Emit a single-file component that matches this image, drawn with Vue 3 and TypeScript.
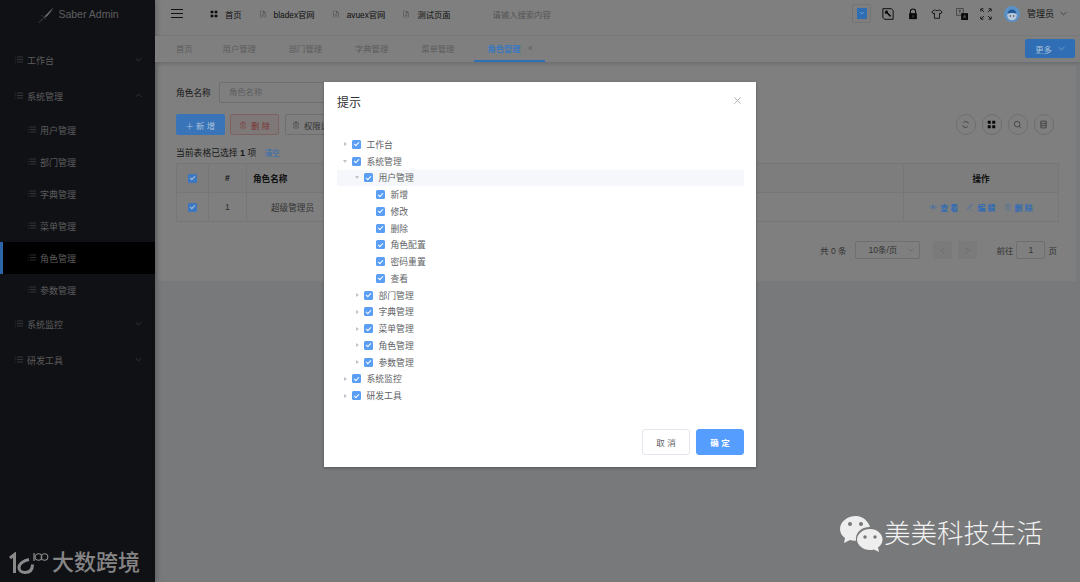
<script setup lang="ts">
const icons: Record<string, string> = {
  list: 'M1 2h1v.8H1zM1 5h1v.8H1zM1 8h1v.8H1zM3.500 2.100H11v.6H3.500zM3.500 5.100H11v.6H3.500zM3.500 8.100H11v.6H3.500z',
  doc: 'M2 1h5l3 3v7H2zM3 2v8h6V5H6V2zM4 6.500h4v.7H4zM4 8h4v.7H4z',
  grid: 'M1 1h4v4H1zM7 1h4v4H7zM1 7h4v4H1zM7 7h4v4H7z',
  trash: 'M1.500 2.500h9v.7h-9zM4.500 1h3v1.500h-.7v-.8H5.200v.8h-.7zM2.500 3.200h.7V10.300h5.600V3.200h.7V11h-7zM5 5h.6v3.500H5zM6.400 5h.6v3.500h-.6z',
  eye: 'M6 2.500C3.500 2.500 1.500 4.500 .5 6c1 1.500 3 3.500 5.500 3.500S10.500 7.500 11.500 6C10.500 4.500 8.500 2.500 6 2.500zM6 3.300c1.900 0 3.500 1.500 4.500 2.700C9.500 7.200 7.900 8.700 6 8.700S2.500 7.200 1.500 6C2.500 4.800 4.100 3.300 6 3.300zM6 4.200a1.800 1.800 0 1 0 0 3.600 1.800 1.800 0 0 0 0-3.600z',
  pen: 'M8 1l2 2-6 6-2.500.5L2 7zM8 2.200L2.800 7.400l-.3 1.100 1.100-.3L8.800 3zM6 10.200h5v.7H6z',
};
const topNav = [
  { label: 'bladex官网' },
  { label: 'avuex官网' },
  { label: '测试页面' },
];
const tabs = ['首页', '用户管理', '部门管理', '字典管理', '菜单管理'];
const subMenu = ['用户管理', '部门管理', '字典管理', '菜单管理', '角色管理', '参数管理'];
const rowActions = [
  { label: '查看', icon: 'eye' },
  { label: '编辑', icon: 'pen' },
  { label: '删除', icon: 'trash' },
];
type Row = { label: string; level: number; arrow: 'open' | 'closed' | 'none'; current?: boolean };
const tree: Row[] = [
  { label: '工作台', level: 0, arrow: 'closed' },
  { label: '系统管理', level: 0, arrow: 'open' },
  { label: '用户管理', level: 1, arrow: 'open', current: true },
  { label: '新增', level: 2, arrow: 'none' },
  { label: '修改', level: 2, arrow: 'none' },
  { label: '删除', level: 2, arrow: 'none' },
  { label: '角色配置', level: 2, arrow: 'none' },
  { label: '密码重置', level: 2, arrow: 'none' },
  { label: '查看', level: 2, arrow: 'none' },
  { label: '部门管理', level: 1, arrow: 'closed' },
  { label: '字典管理', level: 1, arrow: 'closed' },
  { label: '菜单管理', level: 1, arrow: 'closed' },
  { label: '角色管理', level: 1, arrow: 'closed' },
  { label: '参数管理', level: 1, arrow: 'closed' },
  { label: '系统监控', level: 0, arrow: 'closed' },
  { label: '研发工具', level: 0, arrow: 'closed' },
];
function indent(level: number) {
  return { paddingLeft: level * 12 + 'px' };
}
</script>

<template>
  <div class="app">
    <aside class="side">
      <div class="brand">
        <svg class="brand-mark" viewBox="0 0 16 16" width="16" height="16">
          <path d="M15.500 .5C13 3 9 6.500 6.500 9.500l1 1C10.500 8 13.500 4 15.500 .5z" fill="#d8d8d8" />
          <path d="M4 8.500l4 4M1 15.500l4.500-4.500" stroke="#d8d8d8" stroke-width=".9" fill="none" stroke-dasharray="1.200 .8" />
        </svg>
        <span>Saber Admin</span>
      </div>
      <nav class="menu">
        <div class="menu-top">
          <svg class="mi" viewBox="0 0 12 12"><path :d="icons.list" /></svg>
          <span>工作台</span>
          <svg class="chev" viewBox="0 0 10 10"><path d="M1 3l4 4 4-4" /></svg>
        </div>
        <div class="menu-top">
          <svg class="mi" viewBox="0 0 12 12"><path :d="icons.list" /></svg>
          <span>系统管理</span>
          <svg class="chev" viewBox="0 0 10 10"><path d="M1 7l4-4 4 4" /></svg>
        </div>
        <div v-for="m in subMenu" :key="m" class="menu-sub" :class="{ active: m === '角色管理' }">
          <svg class="mi" viewBox="0 0 12 12"><path :d="icons.list" /></svg>
          <span>{{ m }}</span>
        </div>
        <div class="menu-top">
          <svg class="mi" viewBox="0 0 12 12"><path :d="icons.list" /></svg>
          <span>系统监控</span>
          <svg class="chev" viewBox="0 0 10 10"><path d="M1 3l4 4 4-4" /></svg>
        </div>
        <div class="menu-top">
          <svg class="mi" viewBox="0 0 12 12"><path :d="icons.list" /></svg>
          <span>研发工具</span>
          <svg class="chev" viewBox="0 0 10 10"><path d="M1 3l4 4 4-4" /></svg>
        </div>
      </nav>
    </aside>

    <div class="main">
      <header class="top">
        <div class="burger"><i></i><i></i><i></i></div>
        <div class="tnav first">
          <svg viewBox="0 0 12 12" class="ti dark"><path :d="icons.grid" /></svg><span>首页</span>
        </div>
        <div v-for="n in topNav" :key="n.label" class="tnav">
          <svg viewBox="0 0 12 12" class="ti"><path :d="icons.doc" /></svg><span>{{ n.label }}</span>
        </div>
        <div class="search">请输入搜索内容</div>
        <div class="tools">
          <div class="swatch">
            <i class="accent"><svg viewBox="0 0 10 10"><path d="M3 4l2 2 2-2" /></svg></i>
          </div>
          <svg class="tool" viewBox="0 0 14 14">
            <path d="M1 .8h10l2 2.200v10.200H3L1 11z" fill="none" stroke="#111" stroke-width="1.100" />
            <path d="M4 3.500l1.500-1 1.700 1.700-.4 1 3.900 3.900-1.300 1.300-3.900-3.900-1 .4L3 5.500z" fill="#111" />
          </svg>
          <svg class="tool" viewBox="0 0 14 14">
            <path d="M4 6V4.200a3 3 0 0 1 6 0V6" fill="none" stroke="#111" stroke-width="1.300" />
            <path d="M2.500 6h9v7h-9z" fill="#111" /><path d="M6.400 8.500h1.200v2.500H6.400z" fill="#aaa" />
          </svg>
          <svg class="tool" viewBox="0 0 14 14">
            <path d="M4.500 2L1 4.500l1.500 2.200 1.500-.8V12h6V5.900l1.500.8L13 4.500 9.500 2C9 3.500 5 3.500 4.500 2z" fill="none" stroke="#111" stroke-width="1" />
          </svg>
          <svg class="tool" viewBox="0 0 14 14">
            <path d="M.5 .5h8v8h-8z" fill="none" stroke="#777" stroke-width="1" />
            <path d="M3 3h3v.8H3zM4 2h1v4H4z" fill="#777" />
            <path d="M6 6h8v8H6z" fill="#111" />
            <path d="M9.500 8h1l1.500 4h-1l-.3-1H9.300L9 12H8z" fill="#999" />
          </svg>
          <svg class="tool" viewBox="0 0 14 14">
            <path d="M1 4V1h3M1.500 1.500L4.500 4.500M10 1h3v3M12.500 1.500L9.500 4.500M1 10v3h3M1.500 12.500L4.500 9.500M13 10v3h-3M12.500 12.500L9.500 9.500" fill="none" stroke="#222" stroke-width="1.100" />
          </svg>
          <svg class="avatar accent" viewBox="0 0 16 16">
            <circle cx="8" cy="8" r="8" fill="#5a92c8" />
            <circle cx="8" cy="9.500" r="4.800" fill="#b8c8d8" />
            <path d="M3.500 8a4.500 4.500 0 0 1 9 0c-2-1.300-7-1.300-9 0z" fill="#1f5a96" />
            <circle cx="6.300" cy="10" r=".7" fill="#234" /><circle cx="9.700" cy="10" r=".7" fill="#234" />
          </svg>
          <span class="user">管理员</span>
          <svg class="user-chev" viewBox="0 0 10 10"><path d="M1 3l4 4 4-4" /></svg>
        </div>
      </header>

      <div class="tabs">
        <span v-for="t in tabs" :key="t" class="tab">{{ t }}</span>
        <span class="tab on accent">角色管理<em>×</em></span>
        <button class="more accent">更多<svg viewBox="0 0 10 10"><path d="M1 3l4 4 4-4" /></svg></button>
      </div>

      <div class="content">
        <section class="card">
          <div class="form">
            <label>角色名称</label>
            <div class="input">角色名称</div>
          </div>
          <div class="toolbar">
            <button class="btn primary accent">＋ 新 增</button>
            <button class="btn danger"><svg viewBox="0 0 12 12"><path :d="icons.trash" /></svg>删 除</button>
            <button class="btn plain"><svg viewBox="0 0 12 12"><path :d="icons.trash" /></svg>权限设置</button>
            <div class="circles">
              <span class="circle"><svg viewBox="0 0 12 12"><path d="M10 5a4 4 0 0 0-7-1.500M2 7a4 4 0 0 0 7 1.500" fill="none" stroke="#444" stroke-width=".8" /></svg></span>
              <span class="circle"><svg viewBox="0 0 12 12"><path :d="icons.grid" fill="#111" /></svg></span>
              <span class="circle"><svg viewBox="0 0 12 12"><circle cx="5.500" cy="5.500" r="3.800" fill="none" stroke="#444" stroke-width=".8" /><path d="M8.300 8.300L11 11" stroke="#444" stroke-width=".8" /></svg></span>
              <span class="circle"><svg viewBox="0 0 12 12"><path d="M2.500 1.500h7v9h-7zM2.500 4.500h7M2.500 7.500h7" fill="none" stroke="#444" stroke-width=".8" /></svg></span>
            </div>
          </div>
          <div class="selected">当前表格已选择 <b>1</b> 项 <a class="accent">清空</a></div>
          <div class="table">
            <div class="th c"><span class="cb accent"></span></div>
            <div class="th c">#</div>
            <div class="th name">角色名称</div>
            <div class="th"></div>
            <div class="th c">操作</div>
            <div class="td c"><span class="cb accent"></span></div>
            <div class="td c">1</div>
            <div class="td c">超级管理员</div>
            <div class="td"></div>
            <div class="td c actions">
              <span v-for="a in rowActions" :key="a.label" class="accent">
                <svg viewBox="0 0 12 12"><path :d="icons[a.icon]" /></svg>{{ a.label[0] }} {{ a.label[1] }}
              </span>
            </div>
          </div>
          <div class="pager">
            <span>共 0 条</span>
            <div class="size">10条/页<svg viewBox="0 0 10 10"><path d="M1 3l4 4 4-4" /></svg></div>
            <span class="pbtn prev"><svg viewBox="0 0 10 10"><path d="M7 1L3 5l4 4" /></svg></span>
            <span class="pbtn"><svg viewBox="0 0 10 10"><path d="M3 1l4 4-4 4" /></svg></span>
            <span class="goto">前往</span>
            <div class="pinput">1</div>
            <span>页</span>
          </div>
        </section>
      </div>
    </div>

    <div class="overlay">
      <div class="modal">
        <div class="m-head">
          <span>提示</span>
          <svg viewBox="0 0 10 10"><path d="M1.500 1.500l7 7M8.500 1.500l-7 7" /></svg>
        </div>
        <div class="m-tree">
          <div v-for="(r, i) in tree" :key="i" class="t-row" :class="{ current: r.current }" :style="indent(r.level)">
            <span class="t-arrow" :class="r.arrow"></span>
            <span class="cb"></span>
            <span class="t-label">{{ r.label }}</span>
          </div>
        </div>
        <div class="m-foot">
          <button class="f-btn">取 消</button>
          <button class="f-btn ok">确 定</button>
        </div>
      </div>
    </div>

    <div class="wm-left">
      <svg viewBox="0 0 40 22" width="40" height="22">
        <path d="M1 6l4.500-3.500V21" fill="none" stroke="#8a8a8a" stroke-width="3" />
        <path d="M20 7.500c-5 1-10 4-10 8 0 3 2.500 5 6 5 5 0 7.500-3 7.500-8" fill="none" stroke="#8a8a8a" stroke-width="3" />
        <path d="M25 1v8" stroke="#8a8a8a" stroke-width="1.300" />
        <ellipse cx="29.500" cy="5" rx="3.300" ry="3.200" fill="none" stroke="#8a8a8a" stroke-width="1.100" />
        <ellipse cx="35.500" cy="5" rx="3.300" ry="3.200" fill="none" stroke="#8a8a8a" stroke-width="1.100" />
      </svg>
      <span>大数跨境</span>
    </div>
    <div class="wm-right">
      <svg viewBox="0 0 44 40" width="44" height="40">
        <path d="M17 2C8 2 1 8 1 15c0 4 2 7 5 9l-1 5 6-3c2 .6 4 .8 6 .7C16 19 22 13 31 13 29 7 24 2 17 2z" fill="#eee" />
        <path d="M31 15c-7 0-13 5-13 10.500S24 36 31 36c1.500 0 3-.2 4-.6L40 38l-1-4.500c3-2 4.500-4.700 4.500-8C43.500 20 38 15 31 15z" fill="#eee" />
        <circle cx="11" cy="10" r="2" fill="#777" /><circle cx="22" cy="10" r="2" fill="#777" />
        <circle cx="26" cy="23" r="1.700" fill="#777" /><circle cx="36" cy="23" r="1.700" fill="#777" />
      </svg>
      <span>美美科技生活</span>
    </div>
  </div>
</template>

<style scoped>
.app {
  position: relative;
  display: flex;
  width: 1080px;
  height: 582px;
  overflow: hidden;
  font-family: "Liberation Sans", "Noto Sans CJK SC", sans-serif;
  color: #555;
  font-size: 9px;
}
/* Accent elements stay vivid above the dimming layer, as they do in the reference. */
.accent { position: relative; z-index: 2; }
.side { width: 155px; flex: none; background: #20222a; color: #b4b4b4; position: relative; box-shadow: 2px 0 5px rgba(0, 0, 0, .2); }
.brand { height: 28px; display: flex; align-items: center; justify-content: center; gap: 4px; font-size: 10.500px; color: #bbb; }
.brand-mark { margin-left: 2px; margin-top: 2px; }
.menu { margin-top: 14px; }
.menu-top { height: 36px; display: flex; align-items: center; padding-left: 14px; position: relative; }
.menu-sub { height: 32px; display: flex; align-items: center; padding-left: 27px; }
.menu-sub.active { background: #000; padding-left: 27px; position: relative; }
.menu-sub.active::before { content: ""; position: absolute; left: 0; top: 0; bottom: 0; width: 3px; background: #2c66a8; z-index: 2; }
.mi { width: 10px; height: 10px; margin-right: 3px; fill: #b4b4b4; }
.chev { position: absolute; right: 13px; top: 14px; width: 7px; height: 7px; fill: none; stroke: #888; stroke-width: 1; }

.main { flex: 1; min-width: 0; display: flex; flex-direction: column; background: #f0f2f5; }
.top { height: 36px; box-sizing: border-box; background: #fff; display: flex; align-items: center; padding: 0 0 8px 16px; flex: none; color: #333; font-size: 8.300px; border-bottom: 1px solid #f6f6f6; }
.burger { width: 12px; display: flex; flex-direction: column; gap: 3px; margin-right: 27px; }
.burger i { display: block; height: 1px; background: #222; }
.tnav { display: flex; align-items: center; margin-right: 17px; color: #222; }
.ti { width: 8px; height: 8px; margin-right: 7px; fill: #aaa; }
.ti.dark { fill: #111; }
.search { margin-left: 25px; color: #aaa; }
.tools { margin-left: auto; display: flex; align-items: center; padding-right: 13px; }
.swatch { width: 17px; height: 17px; border: 1px solid #e8e8e8; border-radius: 2px; display: flex; align-items: center; justify-content: center; margin-right: 11px; }
.swatch i { width: 10.500px; height: 10.500px; background: #2f6db5; display: block; }
.swatch svg { display: block; width: 10px; height: 10px; fill: none; stroke: #7aa4d0; stroke-width: .8; }
.tool { width: 12px; height: 12px; margin-right: 12.500px; }
.avatar { width: 16px; height: 16px; margin-left: -1px; margin-right: 7px; }
.user { font-size: 9px; color: #333; }
.user-chev { width: 7px; height: 7px; margin-left: 6px; fill: none; stroke: #555; stroke-width: 1; }

.tabs { height: 26px; flex: none; background: #fff; display: flex; align-items: stretch; padding-left: 21px; position: relative; box-shadow: 0 1px 3px rgba(0, 0, 0, .12); font-size: 8.300px; color: #b8b8b8; }
.tab { display: flex; align-items: center; margin-right: 33px; padding-bottom: 2px; }
.tab:first-child { margin-right: 30px; }
.tab.on { color: #3a78c0; margin-left: -13px; padding: 0 13px 0; border-bottom: 2px solid #2f6fb8; margin-right: 0; font-weight: 700; box-sizing: border-box; }
.tab.on em { font-style: normal; font-weight: 400; margin-left: 7px; color: #606060; }
.more { position: absolute; right: 5px; top: 3px; width: 50px; height: 19px; border: 0; border-radius: 2px; background: #2f6db5; color: #a9c0da; font: inherit; font-size: 8.300px; display: flex; align-items: center; justify-content: center; gap: 6px; padding: 0; }
.more svg { width: 7px; height: 7px; fill: none; stroke: #8fb0d4; stroke-width: 1; }

.content { padding: 4px 4px 0 3px; flex: 1; }
.card { background: #fff; height: 215px; padding: 16px 17px 0 18px; box-sizing: border-box; }
.form { display: flex; align-items: center; height: 21px; font-size: 8.700px; color: #333; }
.form label { width: 43px; }
.input { width: 111px; height: 21px; box-sizing: border-box; border: 1px solid #dcdfe6; border-radius: 2px; padding-left: 9px; line-height: 19px; color: #bbb; font-size: 8.300px; }
.toolbar { display: flex; align-items: center; gap: 5.500px; margin-top: 11px; height: 21px; }
.btn { height: 21px; padding: 0; box-sizing: border-box; border-radius: 2px; font: inherit; font-size: 8.300px; display: flex; align-items: center; justify-content: center; }
.btn svg { width: 8px; height: 8px; margin-right: 4px; fill: currentColor; }
.primary { width: 48.500px; background: #3a74b8; border: 0; color: #a9c0da; }
.danger { width: 49px; background: #fef0f0; border: 1px solid #fbc4c4; color: #f56c6c; }
.plain { width: 60px; background: #fff; border: 1px solid #dcdfe6; color: #666; }
.circles { margin-left: auto; margin-right: 5px; display: flex; gap: 5.500px; }
.circle { width: 20.500px; height: 20.500px; box-sizing: border-box; border: 1px solid #ddd; border-radius: 50%; display: flex; align-items: center; justify-content: center; }
.circle svg { width: 9px; height: 9px; }
.selected { margin-top: 12px; height: 12px; line-height: 12px; font-size: 8.800px; color: #333; }
.selected b { font-size: 9px; }
.selected a { color: #2f6cb5; margin-left: 6px; font-size: 7.500px; }
.table { margin-top: 4px; display: grid; grid-template-columns: 32px 38px 92px 1fr 155px; grid-template-rows: 29px 29px; border-top: 1px solid #ebeef5; border-left: 1px solid #ebeef5; }
.th, .td { border-right: 1px solid #ebeef5; border-bottom: 1px solid #ebeef5; display: flex; align-items: center; font-size: 8.600px; min-width: 0; }
.th { background: #fafafa; font-weight: 700; color: #222; }
.th.name { padding-left: 6px; }
.c { justify-content: center; }
.td { color: #666; }
.cb { width: 9px; height: 9px; flex: none; border-radius: 1.500px; background: #5a9ef5; position: relative; display: block; }
.table .cb { background: #3c78c0; position: relative; z-index: 2; }
.cb::after { content: ""; position: absolute; left: 3px; top: 1.500px; width: 2.200px; height: 4px; border: solid #fff; border-width: 0 1px 1px 0; transform: rotate(45deg); }
.table .cb::after { border-color: #a9c0da; }
.actions { gap: 8px; color: #2f6cb5; font-size: 8px; font-weight: 700; }
.actions span { display: flex; align-items: center; }
.actions svg { width: 8px; height: 8px; fill: #2f6cb5; margin-right: 3px; opacity: .7; }
.pager { margin-top: 19px; display: flex; align-items: center; justify-content: flex-end; height: 18px; font-size: 8.500px; color: #666; padding-right: 2px; }
.size { width: 65px; height: 18px; box-sizing: border-box; border: 1px solid #dcdfe6; border-radius: 2px; margin-left: 9px; padding-left: 12px; line-height: 16px; position: relative; }
.size svg { position: absolute; right: 5px; top: 5px; width: 6px; height: 6px; fill: none; stroke: #bbb; stroke-width: 1; }
.pbtn { width: 19px; height: 18px; background: #f4f4f5; border-radius: 2px; margin-left: 6px; display: flex; align-items: center; justify-content: center; }
.pbtn.prev { margin-left: 13px; }
.pbtn svg { width: 7px; height: 7px; fill: none; stroke: #c0c4cc; stroke-width: 1; }
.goto { margin-left: 19px; }
.pinput { width: 29px; height: 18px; box-sizing: border-box; border: 1px solid #dcdfe6; border-radius: 2px; margin: 0 3px; text-align: center; line-height: 16px; }

.overlay { position: absolute; inset: 0; z-index: 1; background: rgba(0, 0, 0, .5); display: flex; justify-content: center; align-items: flex-start; padding-top: 82px; box-sizing: border-box; }
.modal { width: 432px; height: 385px; background: #fff; display: flex; flex-direction: column; box-shadow: 0 1px 3px rgba(0, 0, 0, .3); }
.m-head { height: 54px; flex: none; box-sizing: border-box; padding: 13px 13px 0; display: flex; justify-content: space-between; font-size: 12px; color: #303133; line-height: 16px; }
.m-head svg { width: 9px; height: 9px; margin: 1px 0 0; transform: translateX(-1px); fill: none; stroke: #999; stroke-width: .8; }
.m-tree { flex: 1; padding: 0 12px 0 13px; font-size: 8.800px; color: #606266; }
.t-row { height: 16.750px; display: flex; align-items: center; box-sizing: border-box; }
.t-row.current { background: #f5f7fa; }
.t-arrow { width: 15px; flex: none; display: flex; justify-content: center; padding-left: 1px; box-sizing: border-box; }
.t-arrow.closed::before { content: ""; border-left: 3px solid #c0c4cc; border-top: 2.500px solid transparent; border-bottom: 2.500px solid transparent; }
.t-arrow.open::before { content: ""; border-top: 3px solid #c0c4cc; border-left: 2.500px solid transparent; border-right: 2.500px solid transparent; }
.t-label { margin-left: 5.500px; }
.m-foot { flex: none; display: flex; justify-content: flex-end; gap: 6px; padding: 0 12px 12px; }
.f-btn { width: 48px; height: 26px; box-sizing: border-box; border: 1px solid #e4e7ed; border-radius: 3px; background: #fff; color: #606266; font: inherit; font-size: 8.500px; padding: 0; }
.f-btn.ok { background: #559dff; border-color: #559dff; color: #fff; font-weight: 700; }

.wm-left { position: absolute; z-index: 3; left: 9px; top: 551px; display: flex; align-items: center; color: #858585; font-size: 22px; font-weight: 500; line-height: 24px; }
.wm-left span { margin-left: 3px; }
.wm-right { position: absolute; z-index: 3; left: 839px; top: 514px; display: flex; align-items: center; color: #f2f2f2; font-size: 26.500px; font-weight: 300; line-height: 40px; }
.wm-right span { margin-left: 1px; }
</style>

<style>
html, body { margin: 0; background: #777; }
</style>
